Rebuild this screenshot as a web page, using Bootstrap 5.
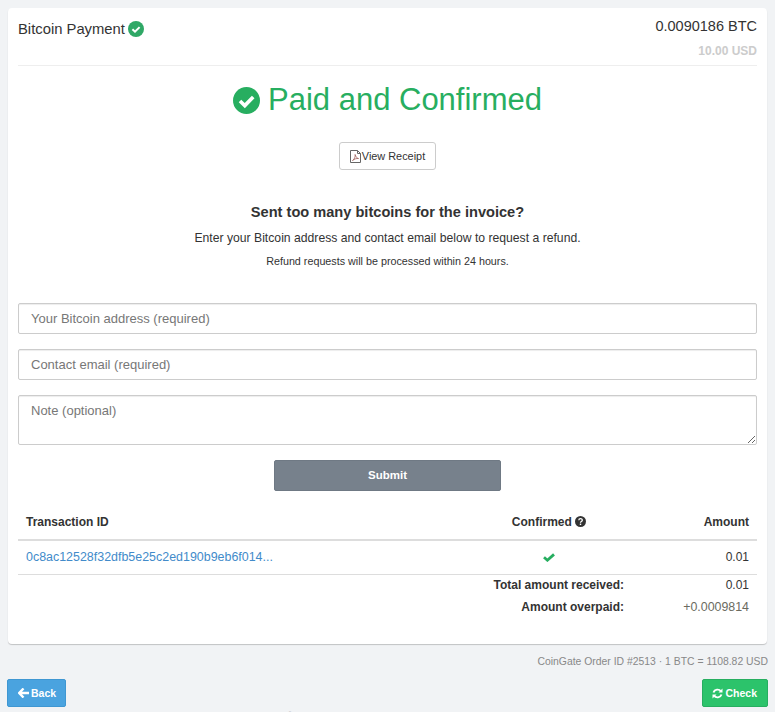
<!DOCTYPE html>
<html lang="en">
<head>
  <meta charset="UTF-8">
  <meta name="viewport" content="width=device-width, initial-scale=1.0">
  <title>Bitcoin Payment</title>
  <link href="https://cdn.jsdelivr.net/npm/bootstrap@5.3.0/dist/css/bootstrap.min.css" rel="stylesheet">
  <style>
    html, body { height: 712px; overflow: hidden; }
    body { background: #f1f3f5; font-family: "Liberation Sans", Arial, sans-serif; font-size: 12px; color: #333; }
    .pay-page { padding: 8px 7px 0 7px; }
    .pay-card { background: #fff; margin: 0 1px 0 1px; padding: 0 10px; height: 636px; border-radius: 4px; box-shadow: 0 1px 1px rgba(0,0,0,.2); }
    .pay-head { height: 58px; border-bottom: 1px solid #eee; }
    .pay-title { font-size: 14.8px; line-height: 18px; padding-top: 12px; color: #333; }
    .pay-title svg { margin-left: 3px; }
    .pay-btc { font-size: 14.5px; line-height: 18px; padding-top: 9px; }
    .pay-usd { font-size: 12px; font-weight: 700; color: #ccc; line-height: 16px; padding-top: 8px; }
    .pay-status { font-size: 31px; line-height: 40px; color: #27ae60; margin: 14px 0 22px; font-weight: 400; }
    .pay-receipt { font-size: 10.9px; line-height: 15px; color: #333; background: #fff; border: 1px solid #ccc; border-radius: 3px; padding: 6px 10px; height: 28px; gap: 1px; }
    .pay-q { font-size: 14.6px; line-height: 20px; font-weight: 700; margin: 32px 0 0; }
    .pay-line1 { font-size: 12.2px; line-height: 16px; margin: 8px 0 0; }
    .pay-line2 { font-size: 10.75px; line-height: 15px; margin: 8px 0 0; }
    .pay-form { margin-top: 34px; }
    .pay-form .form-control { font-size: 13px; line-height: 18px; color: #333; border: 1px solid #ccc; border-radius: 2px; padding: 6px 12px; height: 31px; margin-bottom: 15px; box-shadow: inset 0 1px 1px rgba(0,0,0,.075); }
    .pay-form .form-control::placeholder { color: #777; opacity: 1; }
    .pay-form textarea.form-control { height: 50px; }
    .pay-submit { display: block; width: 227px; height: 31px; margin: 0 auto; padding: 0; background: #77818c; border: 1px solid #6f7984; color: #fff; font-size: 11.5px; font-weight: 700; border-radius: 2px; }
    .pay-table { width: 100%; margin: 15px 0 0; font-size: 12px; table-layout: fixed; }
    .pay-table th { font-weight: 700; padding: 8px; line-height: 17px; border-bottom: 2px solid #ddd; height: 33px; }
    .pay-table td { padding: 8px; line-height: 17px; height: 34px; border-bottom: 1px solid #ddd; }
    .pay-table tr.pay-sum td { border: 0; height: 22px; padding: 0 8px 2px; line-height: 20px; }
    .pay-col-conf { width: 166px; }
    .pay-col-amt { width: 125px; }
    .pay-link { color: #428bca; text-decoration: none; font-size: 12.45px; white-space: nowrap; }
    .pay-over { color: #6b6b5f; font-size: 12.4px; }
    .pay-help-ic { vertical-align: -1px; }
    .pay-note { font-size: 10.4px; line-height: 14px; color: #888; text-align: right; margin-top: 11px; }
    .pay-btn { font-size: 10.5px; font-weight: 700; color: #fff; height: 28px; border-radius: 2px; line-height: 26px; display: inline-flex; align-items: center; gap: 2px; }
    .pay-back { background: #4aa3df; border: 1px solid #3f97d2; padding: 0 9px 0 10px; }
    .pay-check { background: #2cc36b; border: 1px solid #27ae60; padding: 0 10px 0 9px; }
    .pay-foot { margin-top: 10px; }
    .pay-help { font-size: 10px; line-height: 14px; color: #777; text-align: center; margin-top: 3px; }
  </style>
</head>
<body>
  <div class="pay-page">
    <div class="pay-card">
      <div class="pay-head d-flex justify-content-between">
        <div class="pay-title d-flex align-items-center align-self-start">Bitcoin Payment
          <svg width="16" height="16" viewBox="0 0 16 16"><circle cx="8" cy="8" r="8" fill="#2fa866"/><path d="M4.400 8.200l2.600 2.500 4.600-4.600" fill="none" stroke="#fff" stroke-width="2"/></svg>
        </div>
        <div class="text-end">
          <div class="pay-btc">0.0090186 BTC</div>
          <div class="pay-usd">10.00 USD</div>
        </div>
      </div>

      <div class="text-center">
        <h1 class="pay-status d-flex justify-content-center align-items-center gap-2">
          <svg width="27" height="27" viewBox="0 0 27 27"><circle cx="13.500" cy="13.500" r="13.500" fill="#27ae60"/><path d="M7 14l4.800 4.600L20.200 10" fill="none" stroke="#fff" stroke-width="3.600"/></svg>
          Paid and Confirmed
        </h1>
        <button type="button" class="pay-receipt d-inline-flex align-items-center">
          <svg width="11" height="13" viewBox="0 0 11 13"><path d="M.5.5h7l3 3v9H.5z" fill="none" stroke="#666"/><path d="M7.500.5v3h3" fill="none" stroke="#666"/><path d="M2.500 10.500c2-1 3-4 2.600-6 .6 2.500 1.800 3.500 3.400 4-2-.2-4 .4-6 2z" fill="none" stroke="#a0605a" stroke-width=".8"/></svg>
          View Receipt
        </button>
        <p class="pay-q">Sent too many bitcoins for the invoice?</p>
        <p class="pay-line1">Enter your Bitcoin address and contact email below to request a refund.</p>
        <p class="pay-line2">Refund requests will be processed within 24 hours.</p>
      </div>

      <form class="pay-form">
        <input type="text" class="form-control" placeholder="Your Bitcoin address (required)">
        <input type="text" class="form-control" placeholder="Contact email (required)">
        <textarea class="form-control" placeholder="Note (optional)"></textarea>
        <button type="button" class="pay-submit">Submit</button>
      </form>

      <table class="pay-table">
        <thead>
          <tr>
            <th>Transaction ID</th>
            <th class="text-center pay-col-conf">Confirmed
              <svg class="pay-help-ic" width="11" height="11" viewBox="0 0 11 11"><circle cx="5.500" cy="5.500" r="5.500" fill="#333"/><path d="M3.800 4.300c0-2.200 3.500-2.200 3.500-.1 0 1.300-1.800 1.300-1.800 2.500" fill="none" stroke="#fff" stroke-width="1.300"/><rect x="4.800" y="7.600" width="1.400" height="1.400" fill="#fff"/></svg>
            </th>
            <th class="text-end pay-col-amt">Amount</th>
          </tr>
        </thead>
        <tbody>
          <tr>
            <td><a href="#" class="pay-link">0c8ac12528f32dfb5e25c2ed190b9eb6f014...</a></td>
            <td class="text-center"><svg width="12" height="9" viewBox="0 0 12 9"><path d="M1 4.200l3.400 3L11 1.400" fill="none" stroke="#27ae60" stroke-width="2.800"/></svg></td>
            <td class="text-end">0.01</td>
          </tr>
          <tr class="pay-sum">
            <td colspan="2" class="text-end fw-bold">Total amount received:</td>
            <td class="text-end">0.01</td>
          </tr>
          <tr class="pay-sum">
            <td colspan="2" class="text-end fw-bold">Amount overpaid:</td>
            <td class="text-end pay-over">+0.0009814</td>
          </tr>
        </tbody>
      </table>
    </div>

    <div class="pay-note">CoinGate Order ID #2513 · 1 BTC = 1108.82 USD</div>

    <div class="pay-foot d-flex justify-content-between">
      <button type="button" class="pay-btn pay-back">
        <svg width="11" height="10" viewBox="0 0 11 10"><path d="M5.500.5L1.200 5l4.300 4.500M1.500 5H11" fill="none" stroke="#fff" stroke-width="2.400"/></svg>
        Back
      </button>
      <button type="button" class="pay-btn pay-check">
        <svg width="11" height="11" viewBox="0 0 11 11"><path d="M1.500 4.500A4.200 4.200 0 0 1 9 3.500M9.500 6.500A4.200 4.200 0 0 1 2 7.500" fill="none" stroke="#fff" stroke-width="1.900"/><path d="M10.500.5v4h-4zM.5 10.500v-4h4z" fill="#fff"/></svg>
        Check
      </button>
    </div>
    <div class="pay-help">&#9432; CoinGate invoice details link for information</div>
  </div>
</body>
</html>
